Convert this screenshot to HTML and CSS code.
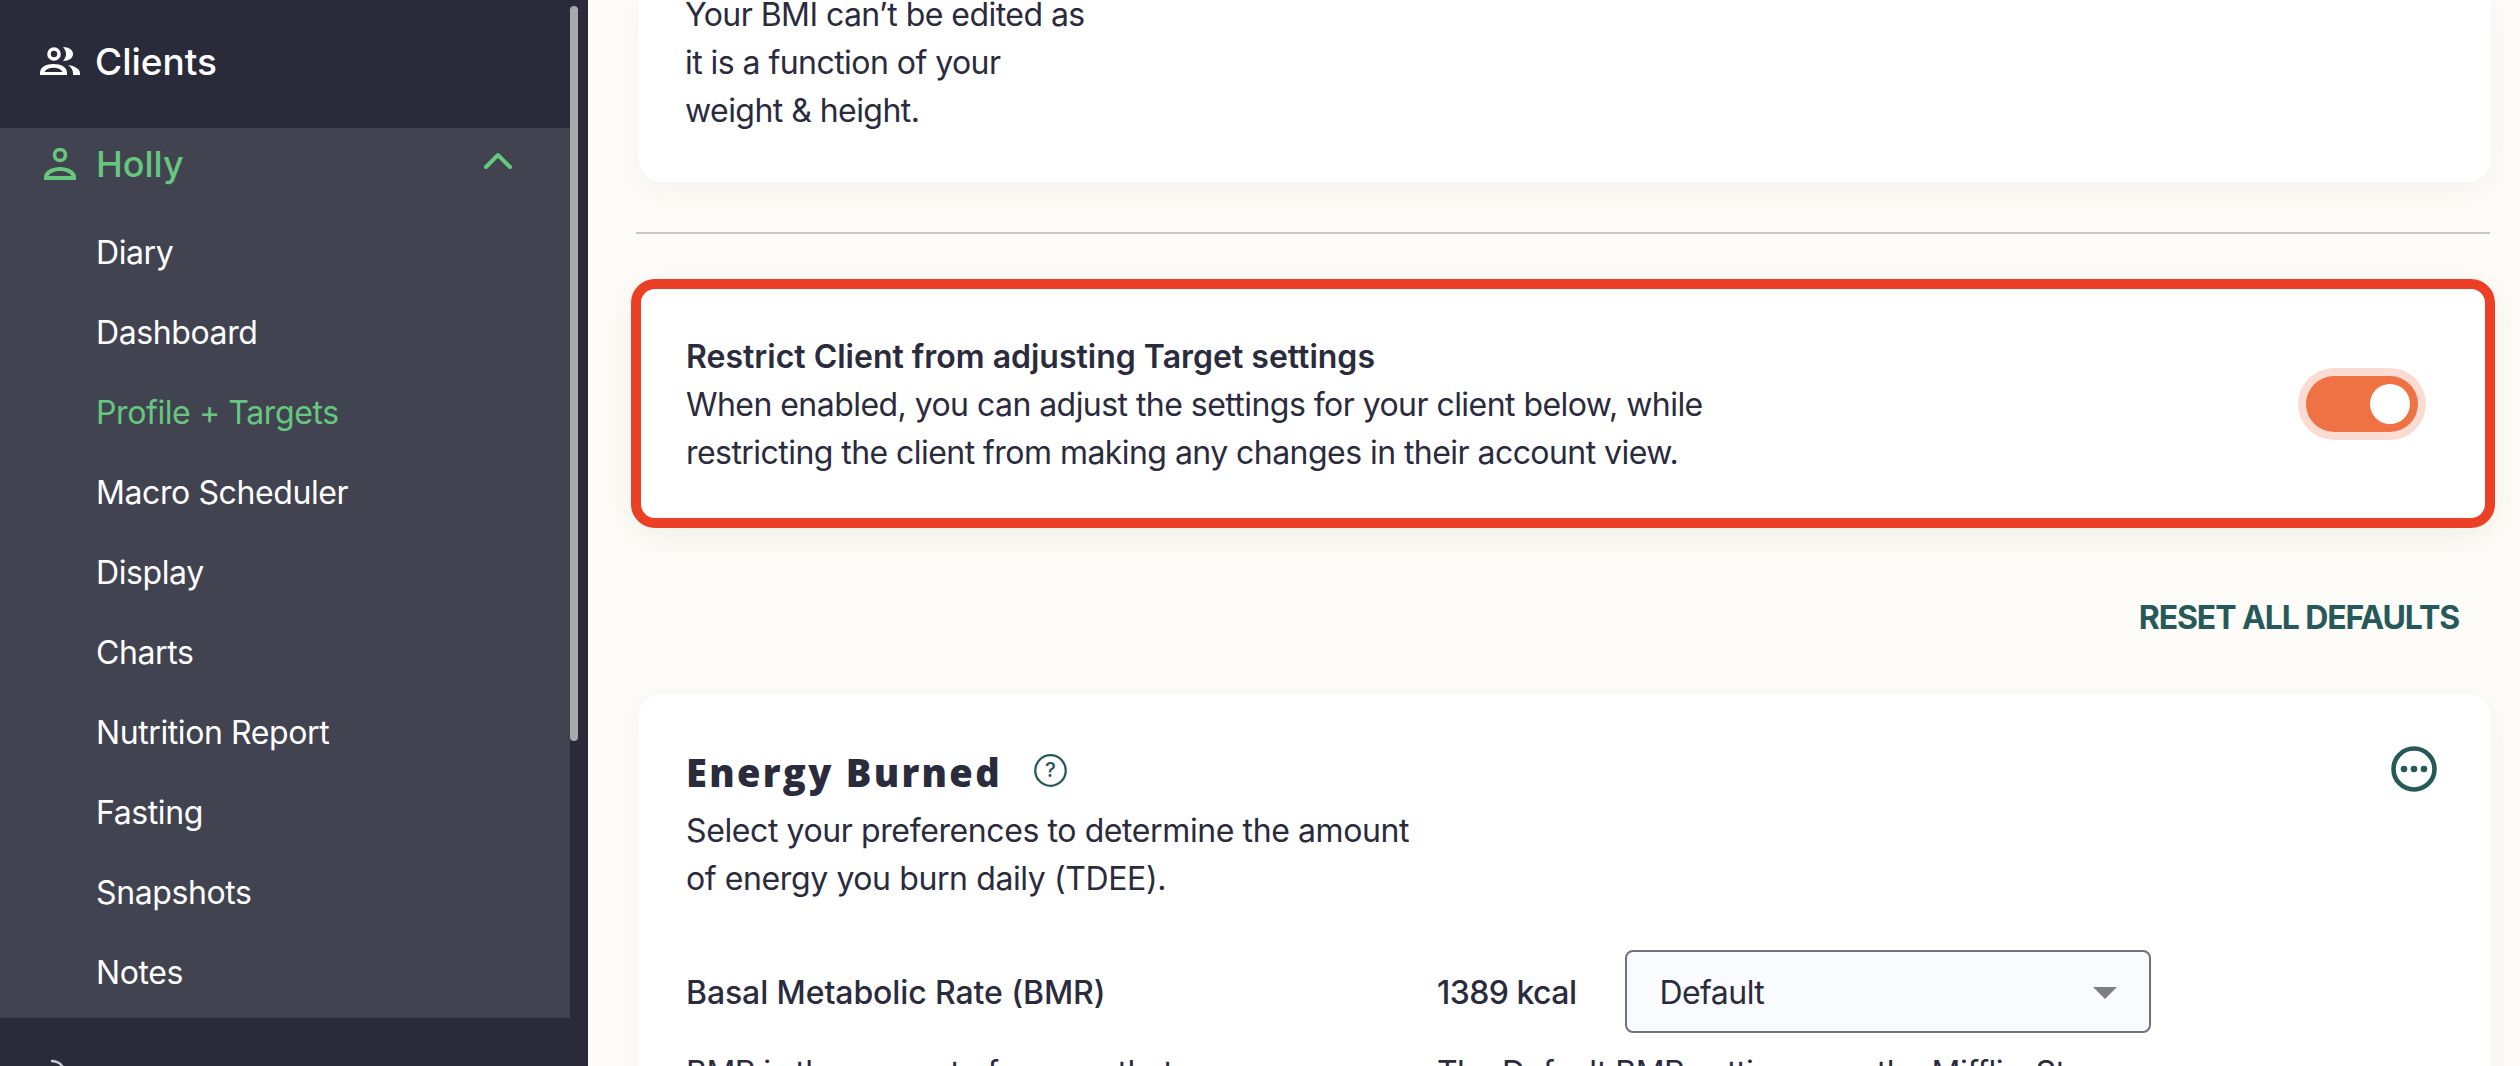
FILE: index.html
```html
<!DOCTYPE html>
<html lang="en">
<head>
<meta charset="utf-8">
<title>Profile + Targets</title>
<link rel="stylesheet" href="styles.css">
</head>
<body>
<div class="app">
  <aside class="sidebar">
    <div class="side-scroll">
      <a class="clients">
        <svg class="ic-people" viewBox="0 0 40 28"><circle cx="14" cy="7" r="5" fill="none" stroke="#fff" stroke-width="3.6"/><path fill="#fff" d="M23 0C29 0 33 3 33 7S29 14 23 14C25 11.500 26 9.500 26 7S25 2.500 23 0Z"/><path fill="#fff" fill-rule="evenodd" d="M0 28V26C0 20 6 17 13.500 17S27 20 27 26V28ZM4.500 25C6 22 9.500 20.800 13.500 20.800S21 22 22.500 25Z"/><path fill="#fff" d="M28 18C35 19 40 22 40 26V28H33V26C33 23 31 20 28 18Z"/></svg>
        <span>Clients</span>
      </a>
      <div class="client-panel">
        <div class="client-head">
          <svg class="ic-person" viewBox="0 0 32 32"><circle cx="16" cy="7" r="5.500" fill="none" stroke="#67c77f" stroke-width="3.600"/><path fill="#67c77f" fill-rule="evenodd" d="M0 32V29C0 23 8 19 16 19S32 23 32 29V32ZM4.500 28C6 25 11 23 16 23S26 25 27.500 28Z"/></svg>
          <span class="client-name">Holly</span>
          <svg class="ic-chev" viewBox="0 0 30 20"><path d="M3 16 15 4l12 12" fill="none" stroke="#67c77f" stroke-width="4" stroke-linecap="round" stroke-linejoin="round"/></svg>
        </div>
        <nav class="menu">
          <a>Diary</a>
          <a>Dashboard</a>
          <a class="active">Profile + Targets</a>
          <a>Macro Scheduler</a>
          <a>Display</a>
          <a>Charts</a>
          <a>Nutrition Report</a>
          <a>Fasting</a>
          <a>Snapshots</a>
          <a>Notes</a>
        </nav>
      </div>
      <svg class="ic-foot" viewBox="0 0 30 30"><path d="M3 3c5 0 9 2 11 5l6 7" fill="none" stroke="#c9c9cf" stroke-width="2.500"/></svg>
    </div>
    <div class="scrollbar"></div>
  </aside>
  <main class="main">
    <section class="card bmi-card">
      <p>Your BMI can’t be edited as<br>it is a function of your<br>weight &amp; height.</p>
    </section>
    <hr class="rule">
    <section class="restrict">
      <div class="restrict-text">
        <strong>Restrict Client from adjusting Target settings</strong>
        <p>When enabled, you can adjust the settings for your client below, while<br>restricting the client from making any changes in their account view.</p>
      </div>
      <div class="toggle"><span class="knob"></span></div>
    </section>
    <div class="reset-row"><a class="reset">RESET ALL DEFAULTS</a></div>
    <section class="card energy">
      <div class="energy-head">
        <div>
          <h2>Energy Burned <svg class="ic-help" viewBox="0 0 32 32"><circle cx="16" cy="16" r="14.800" fill="none" stroke="#265a5a" stroke-width="2.200"/><text x="16" y="22.500" text-anchor="middle" class="help-q">?</text></svg></h2>
          <p class="energy-desc">Select your preferences to determine the amount<br>of energy you burn daily (TDEE).</p>
        </div>
        <svg class="ic-more" viewBox="0 0 46 46"><circle cx="23" cy="23" r="20.500" fill="none" stroke="#265a5a" stroke-width="4.600"/><circle cx="13" cy="23" r="3.300" fill="#265a5a"/><circle cx="23" cy="23" r="3.300" fill="#265a5a"/><circle cx="33" cy="23" r="3.300" fill="#265a5a"/></svg>
      </div>
      <div class="bmr-grid">
        <div class="bmr-col">
          <div class="bmr-label">Basal Metabolic Rate (BMR)</div>
          <p class="bmr-note">BMR is the amount of energy that</p>
        </div>
        <div class="bmr-col">
          <div class="bmr-row">
            <span class="kcal">1389 kcal</span>
            <div class="select"><span>Default</span><i class="caret"></i></div>
          </div>
          <p class="bmr-note">The Default BMR setting uses the Mifflin-St</p>
        </div>
      </div>
    </section>
  </main>
</div>
</body>
</html>
```
FILE: styles.css
```css
* { box-sizing: border-box; }
html, body { margin: 0; height: 100%; overflow: hidden; }
body { font-family: "Inter", "Liberation Sans", sans-serif; color: #2a2b3d; background: #fdfcf8; }
p { margin: 0; }
.app { display: flex; height: 1066px; overflow: hidden; }

.sidebar { position: relative; flex: 0 0 588px; background: #2a2b3a; overflow: hidden; }
.side-scroll { width: 570px; }
.clients { display: flex; align-items: center; height: 128px; padding: 0 0 6px 40px; gap: 15px; color: #fff; font-size: 37px; font-weight: 500; }
.ic-people { width: 40px; height: 28px; }
.client-panel { background: #414351; height: 890px; }
.client-head { display: flex; align-items: center; height: 72px; padding-left: 44px; color: #67c77f; font-size: 36px; font-weight: 500; }
.ic-person { width: 32px; height: 32px; }
.client-name { margin-left: 20px; flex: 1; }
.ic-chev { width: 30px; height: 20px; margin-right: 57px; margin-top: -6px; }
.menu { display: flex; flex-direction: column; padding-top: 12px; }
.menu a { display: flex; align-items: center; height: 80px; padding-left: 96px; color: #fff; font-size: 32px; letter-spacing: -0.4px; }
.menu a.active { color: #67c77f; }
.ic-foot { display: block; width: 30px; height: 30px; margin: 40px 0 0 48px; }
.scrollbar { position: absolute; left: 570px; top: 6px; width: 8px; height: 735px; border-radius: 4px; background: #a9a9ab; }

.main { flex: 1; min-width: 0; padding: 0 30px 0 48px; font-size: 32px; line-height: 48px; letter-spacing: -0.55px; }
.card { background: #fff; border-radius: 24px; box-shadow: 0 0 0 1px #f5f6fc, 0 8px 32px rgba(60, 50, 30, .05); margin-left: 2px; margin-right: -1px; }
.bmi-card { display: flow-root; height: 182px; padding: 0 47px; border-radius: 0 0 24px 24px; }
.bmi-card p { margin-top: -9px; }
.rule { height: 2px; border: 0; margin: 50px 0 0; background: #c9c8c3; }
.restrict { display: flex; align-items: center; justify-content: space-between; height: 249px; margin: 45px -5px 0 -5px; padding: 0 67px 0 45px; border: 10px solid #eb4025; border-radius: 24px; background: #fff; box-shadow: 0 8px 32px rgba(60, 50, 30, .07); }
.restrict-text { padding-top: 2px; }
.restrict strong { font-weight: 600; display: block; letter-spacing: 0; }
.toggle { display: flex; align-items: center; justify-content: flex-end; width: 112px; height: 56px; padding: 8px; border-radius: 28px; background: #ef7245; box-shadow: 0 0 0 8px #fadcd2; }
.knob { width: 40px; height: 40px; border-radius: 50%; background: #fff; }
.reset-row { display: flex; justify-content: flex-end; margin-top: 66px; padding-right: 31px; }
.reset { color: #265a5a; font-size: 32px; font-weight: 700; letter-spacing: -1.1px; }
.energy { margin-top: 51px; padding: 49px 48px 0 48px; height: 420px; }
.energy-head { display: flex; justify-content: space-between; align-items: flex-start; }
.energy h2 { margin: 0; display: flex; align-items: center; gap: 32px; font-family: "Open Sans", sans-serif; font-size: 38px; font-weight: 800; letter-spacing: 2.3px; line-height: 60px; }
.ic-help { width: 33px; height: 33px; margin-bottom: 4px; }
.help-q { font-family: "Inter", sans-serif; font-size: 20px; font-weight: 500; fill: #265a5a; letter-spacing: 0; }
.energy-desc { margin-top: 5px; letter-spacing: -0.4px; }
.ic-more { width: 46px; height: 46px; margin: 4px 6px 0 0; }
.bmr-grid { display: grid; grid-template-columns: 751px 1fr; margin-top: 47px; }
.bmr-label { height: 83px; display: flex; align-items: center; padding-top: 2px; font-weight: 500; letter-spacing: -0.1px; }
.bmr-row { display: flex; align-items: center; gap: 49px; height: 83px; }
.kcal { font-weight: 500; padding-top: 2px; }
.select { display: flex; align-items: center; justify-content: space-between; width: 526px; height: 83px; padding: 2px 32px 0; background: #fafbff; border: 2px solid #72727e; border-radius: 8px; }
.caret { width: 0; height: 0; border-left: 12px solid transparent; border-right: 12px solid transparent; border-top: 12px solid #7e7e88; }
.bmr-note { margin-top: 16px; white-space: nowrap; }
```
